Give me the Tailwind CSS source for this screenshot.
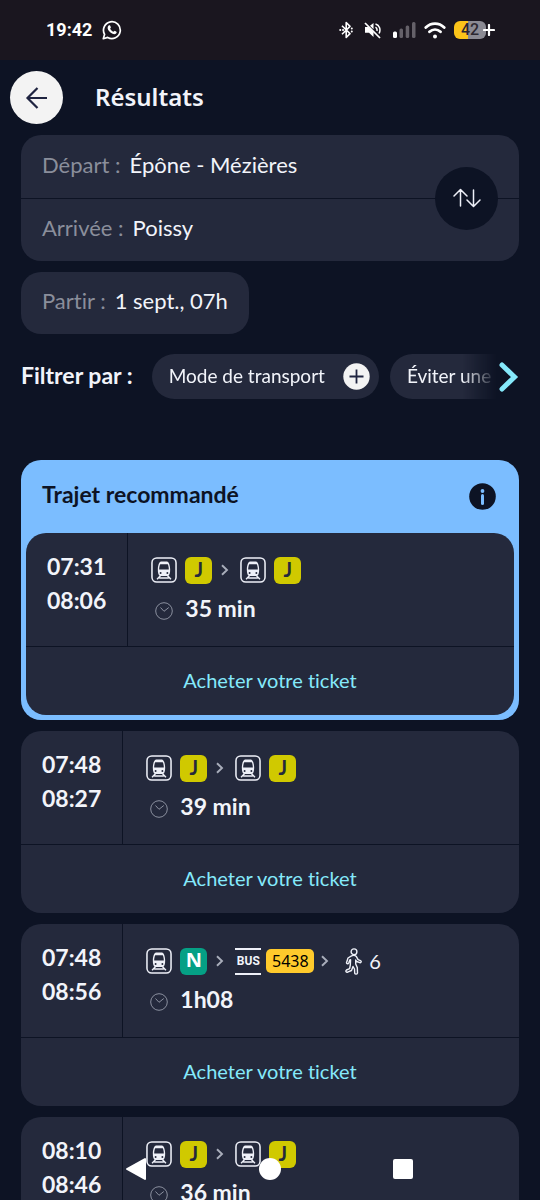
<!DOCTYPE html>
<html lang="fr">
<head>
<meta charset="utf-8">
<meta name="viewport" content="width=device-width, initial-scale=1">
<title>Résultats</title>
<script src="https://cdn.jsdelivr.net/npm/@tailwindcss/browser@4"></script>
</head>
<body class="flex h-dvh flex-col overflow-hidden bg-[#0d1324] font-['Lato',sans-serif] text-[22px] leading-8 text-[#f2f4fa] [font-variant-ligatures:none]">

<svg class="hidden" aria-hidden="true">
  <symbol id="train" viewBox="0 0 27 27">
    <rect x="1" y="1" width="25" height="25" rx="5" fill="none" stroke="#eef0f8" stroke-width="1.6"/>
    <path fill="#eef0f8" fill-rule="evenodd" d="M10.400 4.800h6.200c2 .4 3.200 3.800 3.300 8.200.1 3.800-.8 6.400-2.600 6.800H9.700c-1.800-.4-2.700-3-2.600-6.800.1-4.400 1.300-7.800 3.300-8.200zM9.600 7.600C8.900 9 8.500 11 8.500 13h10c0-2-.4-4-1.100-5.400zM10 15.600a1 1 0 1 0 0 2 1 1 0 0 0 0-2zM17 15.600a1 1 0 1 0 0 2 1 1 0 0 0 0-2z"/>
    <path stroke="#eef0f8" stroke-width="1.500" fill="none" d="M9.800 19.500 6.300 23.200M17.200 19.500l3.500 3.700M8.500 21.800h10"/>
  </symbol>
  <symbol id="sep" viewBox="0 0 8 12">
    <path d="M1 1.200 6 6l-5 4.800" fill="none" stroke="#a9aebb" stroke-width="1.900"/>
  </symbol>
  <symbol id="clock" viewBox="0 0 18 18">
    <circle cx="9" cy="9" r="8.300" fill="none" stroke="#8b909f" stroke-width="1"/>
    <path d="M5.500 5.500 9 9.300 13.800 5.500" fill="none" stroke="#8b909f" stroke-width="1"/>
  </symbol>
</svg>

<div class="flex h-[60px] shrink-0 items-center justify-between bg-[#1a161f] pr-[45px] pl-[46px] text-white">
  <div class="flex items-center gap-[10px]">
    <span class="font-['Roboto',sans-serif] text-[18px] font-bold">19:42</span>
    <svg class="size-5" viewBox="0 0 20 20" fill="none" stroke="#fff" stroke-width="1.700" role="img" aria-label="WhatsApp">
      <path d="M1.300 18.700 2.600 14.300A8.400 8.400 0 1 1 5.700 17.400z" stroke-linejoin="round"/>
      <path fill="#fff" stroke="none" d="M7 5.300c.5-.2 1-.1 1.200.4l.7 1.600c.1.300-.7 1.100-.7 1.400.7 1.400 1.700 2.300 3.200 3 .4 0 1-1 1.400-.9l1.600.9c.6.400.1 1.600-.6 2.100-1.200.9-3.300.3-5-1-1.500-1.100-2.800-2.800-3.100-4.300-.2-1.200.4-2.700 1.300-3.200z"/>
    </svg>
  </div>
  <div class="flex items-center gap-2">
    <svg class="h-[18px] w-4" viewBox="0 0 16 18" fill="none" stroke="#fff" stroke-width="1.600" stroke-linejoin="round" role="img" aria-label="Bluetooth">
      <path d="M4 4.800 12 12.600 8.200 16.500v-15L12 5.400 4 13.200"/>
      <path d="M2.200 9h.1M5 9h.1M13.800 7.500v.1M13.800 10.500v.1" stroke-linecap="round" stroke-width="2"/>
    </svg>
    <svg class="ml-[2px] h-[18px] w-[17px]" viewBox="0 0 17 18" role="img" aria-label="Son coupé">
      <path fill="#fff" d="M1 6h3.500l5 5v5L5 11.700H1zM6 4.800 9.500 2v6.200z"/>
      <path d="M1 2 16 17" stroke="#fff" stroke-width="1.700"/>
      <path d="M11.500 3c4.300 1.300 5.400 5.800 3.600 9.500M11.500 6.200c1.300.8 1.800 2.300 1.400 3.800" fill="none" stroke="#fff" stroke-width="1.500"/>
    </svg>
    <svg class="ml-1 h-4 w-[23px]" viewBox="0 0 23 16" role="img" aria-label="Réseau">
      <rect y="9.500" width="4" height="6.500" rx="1.500" fill="#fff"/>
      <g fill="#656169"><rect x="6.500" y="6.500" width="3.500" height="9.500" rx="1.500"/><rect x="12.700" y="3.500" width="3.500" height="12.500" rx="1.500"/><rect x="19" width="3.500" height="16" rx="1.500"/></g>
    </svg>
    <svg class="h-[17px] w-[22px]" viewBox="0 0 22 17" fill="none" stroke="#fff" stroke-width="2.800" stroke-linecap="round" role="img" aria-label="Wi-Fi">
      <path d="M1.800 5.500C7 .4 15 .4 20.200 5.500M5.500 9.800c3.300-3 7.700-3 11 0"/><circle cx="11" cy="14.500" r="1" fill="#fff" stroke-width="2"/>
    </svg>
    <div class="flex items-center">
      <div class="flex h-[18px] w-8 items-center justify-center rounded-[6px] bg-linear-to-r from-[#fcc419] from-45% to-[#8b8a93] to-45% font-['Roboto',sans-serif] text-[16px] font-medium text-[#2b2730]">42</div>
      <svg class="-ml-[3px] size-3" viewBox="0 0 12 12"><path d="M6 1v10M1 6h10" stroke="#fff" stroke-width="2.200" stroke-linecap="round"/></svg>
    </div>
  </div>
</div>

<header class="flex shrink-0 items-center gap-8 px-[10px] pt-[11px] pb-[11px]">
  <button type="button" aria-label="Retour" class="grid size-[53px] place-items-center rounded-full bg-[#f3f3f3]">
    <svg class="size-6" viewBox="0 0 24 24" fill="none" stroke="#1f2440" stroke-width="2.200"><path d="M22 12H3M12.500 2 2.500 12l10 10"/></svg>
  </button>
  <h1 class="pb-[2px] font-['Noto_Sans',sans-serif] text-[24px] font-semibold">Résultats</h1>
</header>

<main class="min-h-0 flex-1 overflow-y-auto px-[21px] [scrollbar-width:none]">
  <form>
    <div class="relative overflow-hidden rounded-[20px] bg-[#24293c]">
      <div class="flex h-16 items-center gap-[9px] border-b border-[#0d1324] pr-[90px] pb-1 pl-[21px]">
        <label for="from" class="shrink-0 text-[#8a8e9b]">Départ :</label>
        <input id="from" type="text" value="Épône - Mézières" class="min-w-0 flex-1 bg-transparent outline-none">
      </div>
      <div class="flex h-[62px] items-center gap-[9px] pr-[90px] pb-1 pl-[21px]">
        <label for="to" class="shrink-0 text-[#8a8e9b]">Arrivée :</label>
        <input id="to" type="text" value="Poissy" class="min-w-0 flex-1 bg-transparent outline-none">
      </div>
      <button type="button" aria-label="Inverser départ et arrivée" class="absolute inset-y-0 right-[21px] my-auto grid size-[63px] place-items-center rounded-full bg-[#0d1324]">
        <svg class="h-5 w-7" viewBox="0 0 28 20" fill="none" stroke="#eef0f8" stroke-width="1.500" stroke-linecap="round" stroke-linejoin="round"><path d="M7.500 18V2M1 8l6.500-6.500L14 8M20.500 2v16M14 12l6.500 6.500L27 12"/></svg>
      </button>
    </div>
    <button type="button" class="mt-[11px] flex h-[62px] items-center gap-[9px] rounded-[20px] bg-[#24293c] px-[21px] pb-1">
      <span class="text-[#8a8e9b]">Partir :</span><span>1 sept., 07h</span>
    </button>

    <div class="mt-5 flex items-center">
      <span class="mr-[19px] shrink-0 pb-1 text-[23px] font-bold">Filtrer par :</span>
      <div class="flex min-w-0 flex-1 gap-[11px] overflow-hidden text-[19px] mask-r-from-90%">
        <button type="button" class="flex h-[45px] shrink-0 items-center gap-[18px] rounded-full bg-[#24293c] pr-[9px] pl-[17px]"><span class="pb-[2px]">Mode de transport</span>
          <svg class="size-[27px]" viewBox="0 0 27 27"><circle cx="13.500" cy="13.500" r="13.200" fill="#f3f3f3"/><path d="M13.500 6.500v14M6.500 13.500h14" stroke="#1f2440" stroke-width="1.800"/></svg>
        </button>
        <button type="button" class="flex h-[45px] shrink-0 items-center rounded-full bg-[#24293c] pr-14 pb-[2px] pl-[17px]">Éviter une</button>
      </div>
      <button type="button" aria-label="Filtres suivants" class="ml-[2px] shrink-0">
        <svg class="h-[30px] w-5" viewBox="0 0 20 30" fill="none" stroke="#85e9fb" stroke-width="5" stroke-linecap="round" stroke-linejoin="miter"><path d="M3 3 15.500 15 3 27"/></svg>
      </button>
    </div>
  </form>

  <section class="mt-[61px] rounded-[20px] bg-[#7bbdff] p-[5px]">
    <div class="flex h-[68px] items-center justify-between pr-[18px] pb-[2px] pl-4">
      <h2 class="pb-2 text-[23px] font-bold text-[#0d1324]">Trajet recommandé</h2>
      <button type="button" aria-label="Informations">
        <svg class="mb-1 size-[27px]" viewBox="0 0 27 27"><circle cx="13.500" cy="13.500" r="13.300" fill="#0d1324"/><circle cx="13.500" cy="8" r="1.900" fill="#7bbdff"/><path d="M13.500 12.500v8" stroke="#7bbdff" stroke-width="3" stroke-linecap="round"/></svg>
      </button>
    </div>
    <article class="rounded-[20px] bg-[#24293c]">
      <div class="flex border-b border-[#0d1324]">
        <div class="border-r border-[#0d1324] px-[21px] pt-4 text-[23px] leading-[34px] font-bold"><time class="block w-[59px]">07:31</time><time class="block">08:06</time></div>
        <div class="px-[23px] pt-5 pb-5">
          <div class="flex h-[34px] items-center">
            <svg class="size-[26px]" role="img" aria-label="Train"><use href="#train"/></svg>
            <span class="ml-2 grid size-[27px] place-items-center rounded-[6px] bg-[#d0c900] pb-1 text-[20px] leading-6 font-bold text-[#24293c]">J</span>
            <svg class="mx-[9px] h-3 w-2"><use href="#sep"/></svg>
            <svg class="ml-[2px] size-[26px]" role="img" aria-label="Train"><use href="#train"/></svg>
            <span class="ml-2 grid size-[27px] place-items-center rounded-[6px] bg-[#d0c900] pb-1 text-[20px] leading-6 font-bold text-[#24293c]">J</span>
          </div>
          <div class="mt-[5px] flex h-[34px] items-center gap-3 pl-1 text-[23px] font-bold"><svg class="mt-1 size-[18px]"><use href="#clock"/></svg><span class="pb-[2px]">35 min</span></div>
        </div>
      </div>
      <a href="#" class="flex h-[68px] items-center justify-center pb-[2px] text-[20px] text-[#85e9fb]">Acheter votre ticket</a>
    </article>
  </section>

  <article class="mt-[11px] rounded-[20px] bg-[#24293c]">
    <div class="flex border-b border-[#0d1324]">
      <div class="border-r border-[#0d1324] px-[21px] pt-4 text-[23px] leading-[34px] font-bold"><time class="block w-[59px]">07:48</time><time class="block">08:27</time></div>
      <div class="px-[23px] pt-5 pb-5">
        <div class="flex h-[34px] items-center">
          <svg class="size-[26px]" role="img" aria-label="Train"><use href="#train"/></svg>
          <span class="ml-2 grid size-[27px] place-items-center rounded-[6px] bg-[#d0c900] pb-1 text-[20px] leading-6 font-bold text-[#24293c]">J</span>
          <svg class="mx-[9px] h-3 w-2"><use href="#sep"/></svg>
          <svg class="ml-[2px] size-[26px]" role="img" aria-label="Train"><use href="#train"/></svg>
          <span class="ml-2 grid size-[27px] place-items-center rounded-[6px] bg-[#d0c900] pb-1 text-[20px] leading-6 font-bold text-[#24293c]">J</span>
        </div>
        <div class="mt-[5px] flex h-[34px] items-center gap-3 pl-1 text-[23px] font-bold"><svg class="mt-1 size-[18px]"><use href="#clock"/></svg><span class="pb-[2px]">39 min</span></div>
      </div>
    </div>
    <a href="#" class="flex h-[68px] items-center justify-center pb-[2px] text-[20px] text-[#85e9fb]">Acheter votre ticket</a>
  </article>

  <article class="mt-[11px] rounded-[20px] bg-[#24293c]">
    <div class="flex border-b border-[#0d1324]">
      <div class="border-r border-[#0d1324] px-[21px] pt-4 text-[23px] leading-[34px] font-bold"><time class="block w-[59px]">07:48</time><time class="block">08:56</time></div>
      <div class="px-[23px] pt-5 pb-5">
        <div class="flex h-[34px] items-center">
          <svg class="size-[26px]" role="img" aria-label="Train"><use href="#train"/></svg>
          <span class="ml-2 grid size-[27px] place-items-center rounded-[6px] bg-[#05a085] pb-1 font-['Noto_Sans',sans-serif] text-[20px] leading-6 font-bold text-white">N</span>
          <svg class="mx-[9px] h-3 w-2"><use href="#sep"/></svg>
          <span class="ml-[2px] grid h-[27px] w-[26px] place-items-center border-y-2 border-[#eef0f8] font-['Roboto',sans-serif] text-[12px] leading-4 font-bold">BUS</span>
          <span class="ml-[5px] grid h-6 w-12 place-items-center rounded-[5px] bg-[#ffca2c] font-['Noto_Sans',sans-serif] text-[16px] leading-6 text-black">5438</span>
          <svg class="ml-[7px] h-3 w-2"><use href="#sep"/></svg>
          <svg class="ml-4 h-[27px] w-[17px]" viewBox="0 0 17 27" fill="none" stroke="#eef0f8" stroke-width="1.400" stroke-linecap="round" stroke-linejoin="round" role="img" aria-label="Marche">
            <circle cx="9" cy="3.800" r="2.900"/>
            <path d="M6.500 7.800 3 10 1.500 14.800c.2 1.200 1.700 1.300 2.200.2L4.800 12l.8-.3-.3 5.500L4.600 20.600 1.500 22c-1.200.9-.4 2.600 1.100 2.200l3.900-1.700 1.500-4 1.500 2.500.2 4.200c.5 1.300 2.700 1.200 2.800-.3l-.2-5.300-1.600-3.600V12l.9 1.500 3.300 1.200c1.400.2 1.800-1.600.6-2.100l-2.400-1-1.700-3C10 7.200 8.200 7.100 6.500 7.800z"/>
          </svg>
          <span class="ml-[7px] text-[20px]">6</span>
        </div>
        <div class="mt-[5px] flex h-[34px] items-center gap-3 pl-1 text-[23px] font-bold"><svg class="mt-1 size-[18px]"><use href="#clock"/></svg><span class="pb-[2px]">1h08</span></div>
      </div>
    </div>
    <a href="#" class="flex h-[68px] items-center justify-center pb-[2px] text-[20px] text-[#85e9fb]">Acheter votre ticket</a>
  </article>

  <article class="mt-[11px] rounded-[20px] bg-[#24293c]">
    <div class="flex border-b border-[#0d1324]">
      <div class="border-r border-[#0d1324] px-[21px] pt-4 text-[23px] leading-[34px] font-bold"><time class="block w-[59px]">08:10</time><time class="block">08:46</time></div>
      <div class="px-[23px] pt-5 pb-5">
        <div class="flex h-[34px] items-center">
          <svg class="size-[26px]" role="img" aria-label="Train"><use href="#train"/></svg>
          <span class="ml-2 grid size-[27px] place-items-center rounded-[6px] bg-[#d0c900] pb-1 text-[20px] leading-6 font-bold text-[#24293c]">J</span>
          <svg class="mx-[9px] h-3 w-2"><use href="#sep"/></svg>
          <svg class="ml-[2px] size-[26px]" role="img" aria-label="Train"><use href="#train"/></svg>
          <span class="ml-2 grid size-[27px] place-items-center rounded-[6px] bg-[#d0c900] pb-1 text-[20px] leading-6 font-bold text-[#24293c]">J</span>
        </div>
        <div class="mt-[5px] flex h-[34px] items-center gap-3 pl-1 text-[23px] font-bold"><svg class="mt-1 size-[18px]"><use href="#clock"/></svg><span class="pb-[2px]">36 min</span></div>
      </div>
    </div>
  </article>
</main>

<nav class="fixed inset-x-0 bottom-0 flex h-[62px] items-center justify-center gap-28 pr-[2px]" aria-label="Navigation système">
  <button type="button" aria-label="Précédent"><svg class="h-6 w-[22px]" viewBox="0 0 22 24"><path d="M2 12 20 2v20z" fill="#fff" stroke="#fff" stroke-width="2" stroke-linejoin="round"/></svg></button>
  <button type="button" aria-label="Accueil" class="size-[22px] rounded-full bg-white"></button>
  <button type="button" aria-label="Applications récentes" class="size-5 rounded-[2px] bg-white"></button>
</nav>
</body>
</html>
